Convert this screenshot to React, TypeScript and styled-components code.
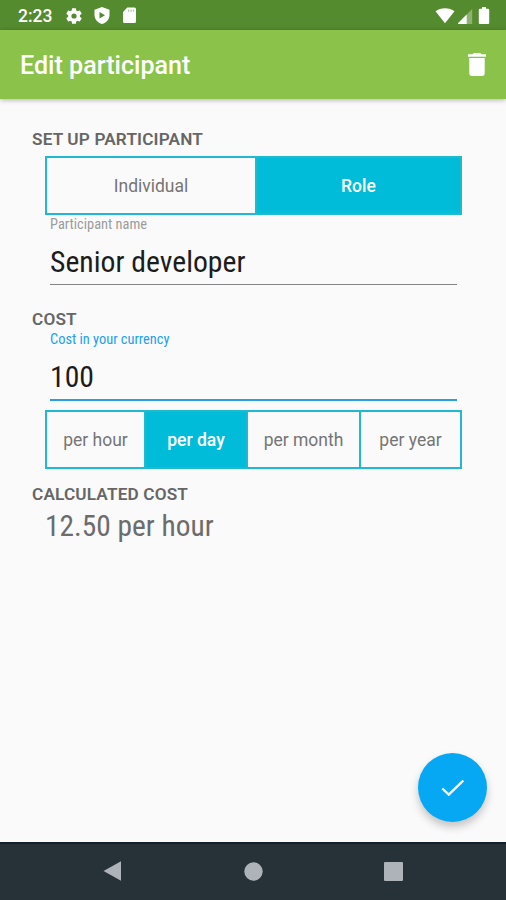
import React, { useState } from "react";
import styled, { createGlobalStyle } from "styled-components";

const GlobalStyle = createGlobalStyle`
  * { box-sizing: border-box; }
  body { margin: 0; background: #fafafa; font-family: Roboto, sans-serif; }
  button, input { font: inherit; margin: 0; padding: 0; border: 0; outline: 0; background: none; }
`;

const Screen = styled.div`
  display: flex;
  flex-direction: column;
  width: 506px;
  height: 900px;
  overflow: hidden;
  background: #fafafa;
`;

const StatusBar = styled.div`
  display: flex;
  align-items: center;
  height: 30px;
  padding: 1px 15px 0 18px;
  background: #558b2f;
  color: #fff;
`;

const Clock = styled.span`
  width: 48px;
  font-size: 17.5px;
  font-weight: 500;
  line-height: 20px;
`;

const StatusIcons = styled.div<{ $gap: number }>`
  display: flex;
  align-items: center;
  gap: ${(p) => p.$gap}px;
`;

const Spacer = styled.div`
  flex: 1;
`;

const Icon = styled.svg<{ $w: number; $h: number }>`
  display: block;
  flex: none;
  width: ${(p) => p.$w}px;
  height: ${(p) => p.$h}px;
`;

const AppBar = styled.header`
  display: flex;
  align-items: center;
  justify-content: space-between;
  flex: none;
  height: 69px;
  padding: 0 20px;
  background: #8bc34a;
  color: #fff;
  box-shadow: 0 1px 5px rgba(0, 0, 0, 0.3);
`;

const Title = styled.h1`
  margin: 2px 0 0;
  font-size: 25.1px;
  font-weight: 500;
  line-height: 30px;
`;

const IconButton = styled.button`
  display: block;
  color: #fff;
  margin-top: -1px;
`;

const Form = styled.main`
  display: flex;
  flex-direction: column;
  flex: 1;
  padding: 30px 44px 0 32px;
`;

const SectionTitle = styled.h2<{ $top?: number }>`
  margin: ${(p) => p.$top ?? 0}px 0 0;
  height: 20px;
  font-size: 17.2px;
  font-weight: 600;
  line-height: 20px;
  letter-spacing: 0.15px;
  color: #666;
`;

const Segments = styled.div<{ $columns: string; $top: number }>`
  display: grid;
  grid-template-columns: ${(p) => p.$columns};
  height: 59px;
  margin: ${(p) => p.$top}px 0 0 13px;
  border: 2px solid #1fbad0;
`;

const Segment = styled.button<{ $active: boolean }>`
  font-size: 17.5px;
  font-weight: ${(p) => (p.$active ? 500 : 400)};
  color: ${(p) => (p.$active ? "#fff" : "#757575")};
  background: ${(p) => (p.$active ? "#00bcd8" : "transparent")};
  padding-top: 1px;
  & + & { border-left: 2px solid #1fbad0; }
`;

const Field = styled.label<{ $focused?: boolean }>`
  display: flex;
  flex-direction: column;
  margin: 0 5px 0 18px;
  height: ${(p) => (p.$focused ? 72 : 70)}px;
  padding-top: ${(p) => (p.$focused ? 1 : 0)}px;
  border-bottom: ${(p) => (p.$focused ? "2px solid #2a9fe0" : "1px solid #858585")};
`;

const FieldLabel = styled.span<{ $focused?: boolean }>`
  font-size: 14.4px;
  font-stretch: 75%;
  line-height: 20px;
  color: ${(p) => (p.$focused ? "#229ff0" : "#9c9c9c")};
`;

const FieldInput = styled.input`
  height: 36px;
  margin-top: 8px;
  font-size: 29.7px;
  font-stretch: 75%;
  color: #1c1c1c;
`;

const Result = styled.div`
  margin: 4px 0 0 13px;
  font-size: 29.4px;
  font-stretch: 75%;
  line-height: 36px;
  color: #6c6c6c;
`;

const Fab = styled.button`
  position: absolute;
  left: 418px;
  top: 753px;
  display: grid;
  place-items: center;
  width: 69px;
  height: 69px;
  border-radius: 50%;
  background: #06a8f4;
  box-shadow: 0 5px 9px rgba(0, 0, 0, 0.22);
`;

const NavBar = styled.nav`
  display: flex;
  align-items: center;
  justify-content: space-between;
  flex: none;
  height: 58px;
  padding: 0 103px 2px;
  border-top: 2px solid #12202a;
  background: #263238;
`;

const GEAR =
  "M19.14 12.94c.04-.3.06-.61.06-.94 0-.32-.02-.64-.07-.94l2.03-1.58a.49.49 0 0 0 .12-.61l-1.92-3.32a.488.488 0 0 0-.59-.22l-2.39.96c-.5-.38-1.03-.7-1.62-.94l-.36-2.54a.484.484 0 0 0-.48-.41h-3.84c-.24 0-.43.17-.47.41l-.36 2.54c-.59.24-1.13.57-1.62.94l-2.39-.96c-.22-.08-.47 0-.59.22L2.74 8.87c-.12.21-.08.47.12.61l2.03 1.58c-.05.3-.09.63-.09.94s.02.64.07.94l-2.03 1.58a.49.49 0 0 0-.12.61l1.92 3.32c.12.22.37.29.59.22l2.39-.96c.5.38 1.03.7 1.62.94l.36 2.54c.05.24.24.41.48.41h3.84c.24 0 .44-.17.47-.41l.36-2.54c.59-.24 1.13-.56 1.62-.94l2.39.96c.22.08.47 0 .59-.22l1.92-3.32c.12-.22.07-.47-.12-.61zM12 15.2A3.2 3.2 0 1 1 12 8.8a3.2 3.2 0 0 1 0 6.4z";

const PERIODS = ["per hour", "per day", "per month", "per year"];

export default function App() {
  const [kind, setKind] = useState("Role");
  const [period, setPeriod] = useState("per day");
  const [name, setName] = useState("Senior developer");
  const [cost, setCost] = useState("100");

  return (
    <Screen>
      <GlobalStyle />
      <StatusBar>
        <Clock>2:23</Clock>
        <StatusIcons $gap={12}>
          <Icon $w={16} $h={16} viewBox="2.200 2.200 19.600 19.600" fill="#fff">
            <path d={GEAR} />
          </Icon>
          <Icon $w={16} $h={17} viewBox="0 0 16 17">
            <path d="M8 0L15.500 2.800V8c0 4.300-3.200 7.800-7.500 9C3.700 15.800.5 12.300.5 8V2.800z" fill="#fff" />
            <path d="M5.500 5v6.600L11 8.300z" fill="#558b2f" />
          </Icon>
          <Icon $w={15} $h={17} viewBox="0 0 15 17">
            <path d="M5.300.5H12.500a1.500 1.500 0 0 1 1.500 1.500v12.500a1.500 1.500 0 0 1-1.500 1.500H2.500A1.500 1.500 0 0 1 1 14.500V5z" fill="#fff" />
            <path d="M6 2.500h1.300v2.300H6zM8.400 2.500h1.300v2.300H8.400zM10.800 2.500h1.300v2.300h-1.300z" fill="#b3c9a3" />
          </Icon>
        </StatusIcons>
        <Spacer />
        <StatusIcons $gap={3}>
          <Icon $w={20} $h={16} viewBox="0 0 20 16">
            <path d="M0.500 3.300C5.500-.8 14.500-.8 19.500 3.300L10 15.300z" fill="#fff" />
          </Icon>
          <Icon $w={15} $h={16} viewBox="0.800 0 15 16">
            <path d="M15 1v15H0z" fill="#8fb274" />
            <path d="M9.500 6.500V16H0z" fill="#fff" />
          </Icon>
          <Icon $w={15} $h={17} viewBox="1 0 15 17">
            <path d="M7 0h4v1.700h2.200a1 1 0 0 1 1 1V16a1 1 0 0 1-1 1H4.800a1 1 0 0 1-1-1V2.700a1 1 0 0 1 1-1H7z" fill="#fff" />
          </Icon>
        </StatusIcons>
      </StatusBar>
      <AppBar>
        <Title>Edit participant</Title>
        <IconButton aria-label="Delete participant">
          <Icon $w={18} $h={23} viewBox="5 3 14 18" preserveAspectRatio="none" fill="#fff">
            <path d="M6 19c0 1.100.9 2 2 2h8c1.100 0 2-.9 2-2V7H6v12zM19 4h-3.500l-1-1h-5l-1 1H5v2h14V4z" />
          </Icon>
        </IconButton>
      </AppBar>
      <Form>
        <SectionTitle>SET UP PARTICIPANT</SectionTitle>
        <Segments $columns="208px 1fr" $top={7}>
          {["Individual", "Role"].map((k) => (
            <Segment key={k} $active={kind === k} onClick={() => setKind(k)}>
              {k}
            </Segment>
          ))}
        </Segments>
        <Field>
          <FieldLabel>Participant name</FieldLabel>
          <FieldInput value={name} onChange={(e) => setName(e.target.value)} />
        </Field>
        <SectionTitle $top={24}>COST</SectionTitle>
        <Field $focused>
          <FieldLabel $focused>Cost in your currency</FieldLabel>
          <FieldInput value={cost} onChange={(e) => setCost(e.target.value)} />
        </Field>
        <Segments $columns="97px 102px 113px 1fr" $top={9}>
          {PERIODS.map((p) => (
            <Segment key={p} $active={period === p} onClick={() => setPeriod(p)}>
              {p}
            </Segment>
          ))}
        </Segments>
        <SectionTitle $top={15}>CALCULATED COST</SectionTitle>
        <Result>12.50 per hour</Result>
      </Form>
      <Fab aria-label="Save">
        <Icon $w={24} $h={18} viewBox="0 0 24 18" fill="none" stroke="#fff" strokeWidth="2.4">
          <path d="M1.300 9.500L7.800 15.700L22.300 1.500" />
        </Icon>
      </Fab>
      <NavBar>
        <Icon $w={19} $h={20} viewBox="0 0 19 20" fill="#adb3b8">
          <path d="M0.500 10L18 .3v19.400z" />
        </Icon>
        <Icon $w={19} $h={19} viewBox="0 0 19 19" fill="#adb3b8">
          <circle cx="9.500" cy="9.500" r="9.200" />
        </Icon>
        <Icon $w={19} $h={19} viewBox="0 0 19 19" fill="#adb3b8">
          <rect width="19" height="19" rx="1" />
        </Icon>
      </NavBar>
    </Screen>
  );
}
